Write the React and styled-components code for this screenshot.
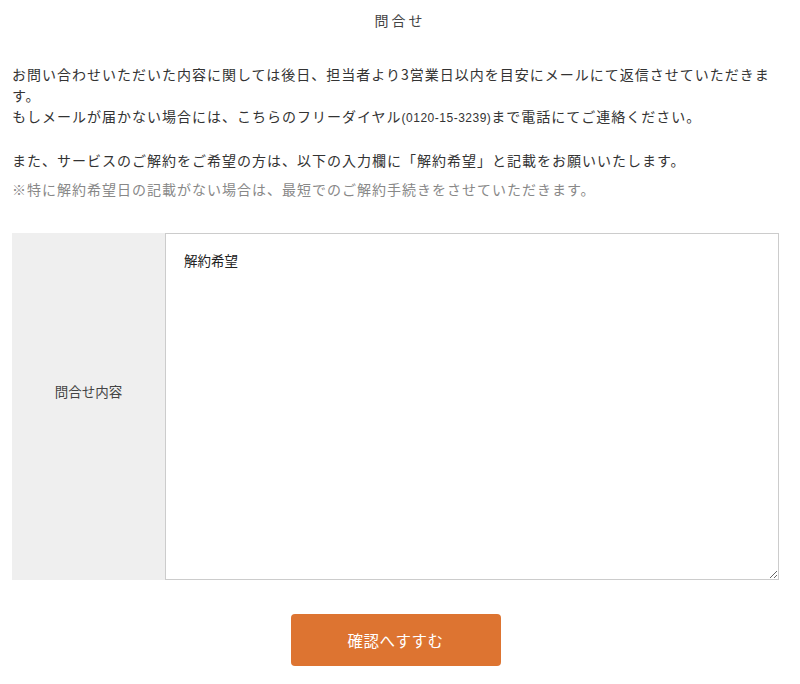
import React from "react";
import styled, { createGlobalStyle } from "styled-components";

const Global = createGlobalStyle`
  html, body { margin: 0; padding: 0; background: #fff; }
  body {
    font-family: "Noto Sans CJK JP", "Liberation Sans", sans-serif;
    color: #333;
  }
`;

const Page = styled.div`
  width: 800px;
  box-sizing: border-box;
  padding: 0 12px 20px 12px;
`;

const Title = styled.h1`
  margin: 0;
  font-size: 14px;
  font-weight: 400;
  line-height: 40px;
  letter-spacing: 3px;
  text-align: center;
  color: #444;
`;

const Intro = styled.div`
  margin-top: 24px;
  font-size: 14px;
  line-height: 21px;
  letter-spacing: 1px;
`;

const Para = styled.p`
  margin: ${(p) => p.$mt || 0}px 0 0 0;
  color: ${(p) => (p.$muted ? "#888" : "#333")};
`;

const Num = styled.span`
  font-family: "Liberation Sans", sans-serif;
  font-size: 12px;
  letter-spacing: 0.5px;
`;

const Form = styled.form`
  width: 767px;
  margin-top: 33px;
  display: flex;
  flex-direction: column;
  align-items: center;
`;

const Row = styled.div`
  width: 100%;
  display: grid;
  grid-template-columns: 153px 1fr;
  height: 347px;
`;

const Label = styled.div`
  background: #efefef;
  display: flex;
  align-items: center;
  justify-content: center;
  padding-bottom: 32px;
  font-size: 13.5px;
  color: #444;
`;

const Field = styled.div`
  display: flex;
`;

const TextArea = styled.textarea`
  flex: 1;
  box-sizing: border-box;
  width: 100%;
  height: 100%;
  margin: 0;
  border: 1px solid #ccc;
  padding: 16px 18px;
  font-family: "Noto Sans CJK JP", "Liberation Sans", sans-serif;
  font-size: 13.5px;
  line-height: 20px;
  color: #222;
  outline: none;
  resize: vertical;
`;

const Submit = styled.button`
  margin-top: 34px;
  width: 210px;
  height: 52px;
  border: none;
  border-radius: 4px;
  background: #dd7431;
  color: #fff;
  font-family: "Noto Sans CJK JP", "Liberation Sans", sans-serif;
  font-size: 15.5px;
  letter-spacing: 0.5px;
  cursor: pointer;
`;

export default function App() {
  return (
    <>
      <Global />
      <Page>
        <Title>問合せ</Title>
        <Intro>
          <Para>
            お問い合わせいただいた内容に関しては後日、担当者より3営業日以内を目安にメールにて返信させていただきます。
            <br />
            もしメールが届かない場合には、こちらのフリーダイヤル<Num>(0120-15-3239)</Num>まで電話にてご連絡ください。
          </Para>
          <Para $mt={21}>
            また、サービスのご解約をご希望の方は、以下の入力欄に「解約希望」と記載をお願いいたします。
          </Para>
          <Para $mt={8} $muted>
            ※特に解約希望日の記載がない場合は、最短でのご解約手続きをさせていただきます。
          </Para>
        </Intro>
        <Form onSubmit={(e) => e.preventDefault()}>
          <Row>
            <Label>問合せ内容</Label>
            <Field>
              <TextArea defaultValue="解約希望" />
            </Field>
          </Row>
          <Submit type="submit">確認へすすむ</Submit>
        </Form>
      </Page>
    </>
  );
}
